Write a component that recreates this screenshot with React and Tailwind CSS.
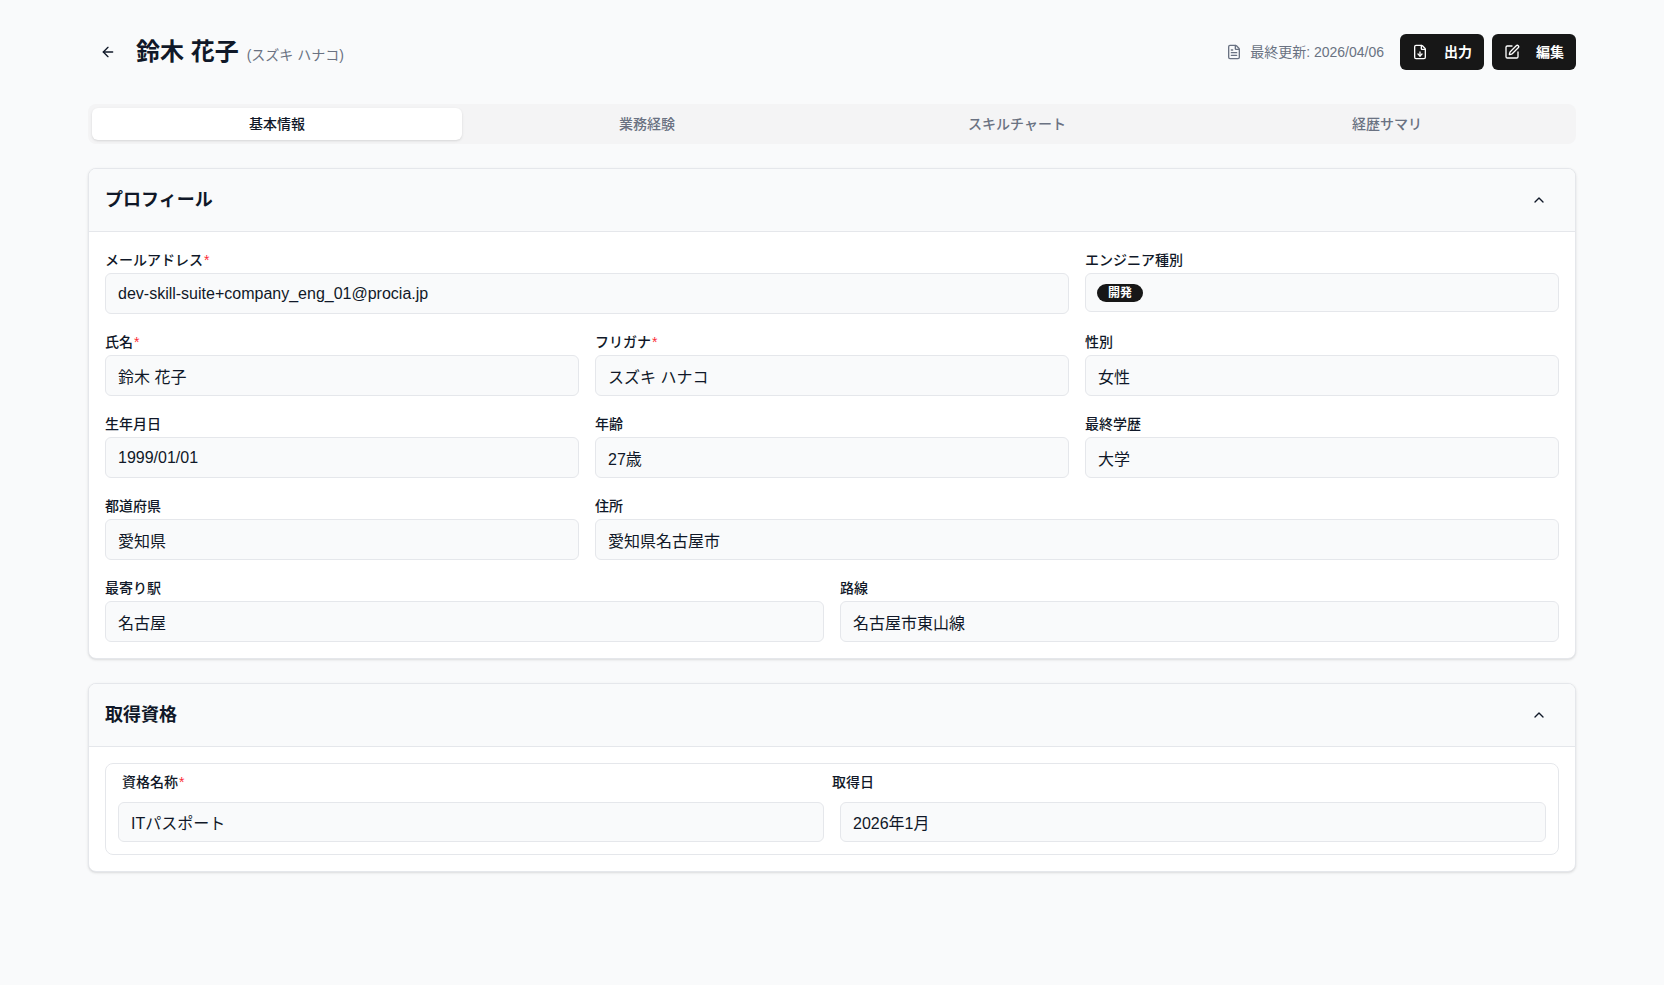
import React from 'react';
import { ArrowLeft, FileText, FileDown, SquarePen, ChevronUp } from 'lucide-react';

const tabs = ['基本情報', '業務経験', 'スキルチャート', '経歴サマリ'];

function Label({ children, required }) {
  return (
    <div className="h-5 text-sm leading-5 font-medium text-gray-900">
      {children}
      {required && <span className="ml-px text-red-500">*</span>}
    </div>
  );
}

function Field({ label, required, children, className = '' }) {
  return (
    <div className={`flex flex-col gap-[3px] ${className}`}>
      <Label required={required}>{label}</Label>
      {children}
    </div>
  );
}

function Input({ value, tall = true }) {
  return (
    <input
      readOnly
      value={value}
      className={`w-full rounded-md border border-gray-200 bg-gray-50 px-3 text-base text-gray-900 outline-none ${
        tall ? 'h-[41px]' : 'h-10'
      }`}
    />
  );
}

function Section({ title, children }) {
  return (
    <section className="overflow-hidden rounded-lg border border-gray-200 bg-white shadow-sm">
      <div className="flex items-center justify-between border-b border-gray-200 bg-gray-50 px-4 py-[15px]">
        <h2 className="text-lg font-bold text-gray-900">{title}</h2>
        <button className="mr-1 flex size-8 items-center justify-center rounded-md text-gray-900">
          <ChevronUp className="size-4" />
        </button>
      </div>
      {children}
    </section>
  );
}

export default function App() {
  return (
    <div className="min-h-screen bg-gray-50 font-['Liberation_Sans','Noto_Sans_CJK_JP',sans-serif] text-gray-900">
      <div className="mx-auto max-w-[1536px] px-6 pt-8 pb-12">
        {/* header */}
        <header className="mb-8 flex items-center justify-between">
          <div className="flex items-center gap-2">
            <button className="flex size-10 items-center justify-center rounded-md text-gray-900">
              <ArrowLeft className="size-4" />
            </button>
            <div className="flex items-baseline gap-2">
              <h1 className="text-2xl font-bold">鈴木 花子</h1>
              <span className="text-sm text-gray-500">(スズキ ハナコ)</span>
            </div>
          </div>
          <div className="flex items-center gap-2">
            <div className="mr-2 flex items-center gap-2 text-sm text-gray-500">
              <FileText className="size-4" />
              <span>最終更新: 2026/04/06</span>
            </div>
            <button className="flex h-9 items-center gap-4 rounded-md bg-[#171717] px-3 text-sm font-bold text-white">
              <FileDown className="size-4" />
              出力
            </button>
            <button className="flex h-9 items-center gap-4 rounded-md bg-[#171717] px-3 text-sm font-bold text-white">
              <SquarePen className="size-4" />
              編集
            </button>
          </div>
        </header>

        {/* tabs */}
        <div className="grid h-10 grid-cols-4 rounded-lg bg-[#f4f4f5] p-1">
          {tabs.map((t, i) => (
            <button
              key={t}
              className={
                i === 0
                  ? 'rounded-md bg-white text-sm font-medium text-gray-900 shadow-sm'
                  : 'rounded-md text-sm font-medium text-gray-500'
              }
            >
              {t}
            </button>
          ))}
        </div>

        <div className="mt-6 flex flex-col gap-6">
          <Section title="プロフィール">
            <div className="flex flex-col gap-[18px] px-4 pt-[18px] pb-4">
              <div className="grid grid-cols-3 gap-4">
                <Field label="メールアドレス" required className="col-span-2">
                  <Input value="dev-skill-suite+company_eng_01@procia.jp" />
                </Field>
                <Field label="エンジニア種別">
                  <div className="flex h-[39px] items-center rounded-md border border-gray-200 bg-gray-50 px-[11px]">
                    <span className="flex h-[18px] items-center rounded-full bg-[#171717] px-[11px] text-xs font-bold text-white">
                      開発
                    </span>
                  </div>
                </Field>
              </div>
              <div className="grid grid-cols-3 gap-4">
                <Field label="氏名" required>
                  <Input value="鈴木 花子" />
                </Field>
                <Field label="フリガナ" required>
                  <Input value="スズキ ハナコ" />
                </Field>
                <Field label="性別">
                  <Input value="女性" />
                </Field>
              </div>
              <div className="grid grid-cols-3 gap-4">
                <Field label="生年月日">
                  <Input value="1999/01/01" />
                </Field>
                <Field label="年齢">
                  <Input value="27歳" />
                </Field>
                <Field label="最終学歴">
                  <Input value="大学" />
                </Field>
              </div>
              <div className="grid grid-cols-3 gap-4">
                <Field label="都道府県">
                  <Input value="愛知県" />
                </Field>
                <Field label="住所" className="col-span-2">
                  <Input value="愛知県名古屋市" />
                </Field>
              </div>
              <div className="grid grid-cols-2 gap-4">
                <Field label="最寄り駅">
                  <Input value="名古屋" />
                </Field>
                <Field label="路線">
                  <Input value="名古屋市東山線" />
                </Field>
              </div>
            </div>
          </Section>

          <Section title="取得資格">
            <div className="px-4 pt-4 pb-4">
              <div className="rounded-lg border border-gray-200 px-3 pt-2 pb-3">
                <div className="grid grid-cols-2 px-1">
                  <Label required>資格名称</Label>
                  <Label>取得日</Label>
                </div>
                <div className="mt-2.5 grid grid-cols-2 gap-4">
                  <Input value="ITパスポート" tall={false} />
                  <Input value="2026年1月" tall={false} />
                </div>
              </div>
            </div>
          </Section>
        </div>
      </div>
    </div>
  );
}
